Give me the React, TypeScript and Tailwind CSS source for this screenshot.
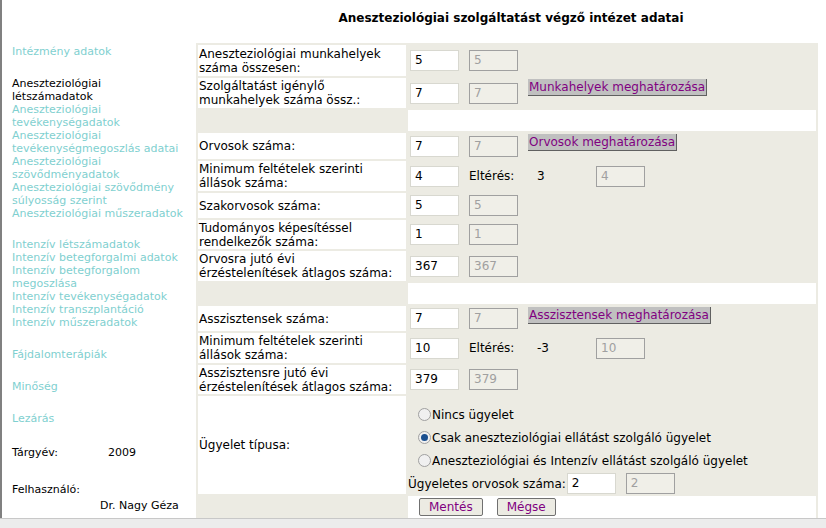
import React from "react";

const F = { fontFamily: '"DejaVu Sans", Verdana, sans-serif' };

function In({ v, dis }: { v: string; dis?: boolean }) {
  return (
    <span
      className={`inline-block w-[49px] h-[21px] border px-[4px] leading-[19px] text-[12px] align-middle ${
        dis ? "border-[#a0a0a0] bg-[#f0efe8] text-[#a0a0a0]" : "border-[#d8d8d0] bg-white text-black"
      }`}
    >
      {v}
    </span>
  );
}

function Btn({ t }: { t: string }) {
  return (
    <span className="inline-block bg-[#c0c0c0] text-[#800080] text-[12px] leading-[16px] px-[1px] border-b border-r border-[#606060] self-start mt-[1px]">
      {t}
    </span>
  );
}

function Row({ label, h, children, spacer }: { label?: React.ReactNode; h: number; children?: React.ReactNode; spacer?: boolean }) {
  return (
    <div className="flex gap-[2px]" style={{ height: h }}>
      <div className={`w-[208px] ${spacer ? "bg-[#ecebe3]" : "bg-white"} px-[1px] flex items-center text-[12px] leading-[14px]`}>{label}</div>
      <div className={`flex-1 ${spacer ? "bg-white" : "bg-[#ecebe3]"} flex items-center gap-[10px] pl-[2px]`}>{children}</div>
    </div>
  );
}

const link = "text-[#7fd0d0]";

export default function App() {
  return (
    <div className="w-[826px] h-[528px] bg-white relative overflow-hidden text-black" style={F}>
      <div className="absolute left-0 top-0 bottom-[10px] w-[2px] bg-[#808080]" />
      <div className="h-[43px] pt-[9px] pl-[196px] text-center text-[12px] font-bold">
        Aneszteziológiai szolgáltatást végző intézet adatai
      </div>
      <div className="flex">
        <div className="w-[196px] pl-[12px] text-[11px] leading-[13px]">
          <div className={`${link} mt-[2px]`}>Intézmény adatok</div>
          <div className="mt-[19px]">Aneszteziológiai<br />létszámadatok</div>
          <div className={link}>Aneszteziológiai<br />tevékenységadatok</div>
          <div className={link}>Aneszteziológiai<br />tevékenységmegoszlás adatai</div>
          <div className={link}>Aneszteziológiai<br />szövődményadatok</div>
          <div className={link}>Aneszteziológiai szövődmény<br />súlyosság szerint</div>
          <div className={link}>Aneszteziológiai műszeradatok</div>
          <div className={`${link} mt-[18px]`}>Intenzív létszámadatok</div>
          <div className={link}>Intenzív betegforgalmi adatok</div>
          <div className={link}>Intenzív betegforgalom<br />megoszlása</div>
          <div className={link}>Intenzív tevékenységadatok</div>
          <div className={link}>Intenzív transzplantáció</div>
          <div className={link}>Intenzív műszeradatok</div>
          <div className={`${link} mt-[19px]`}>Fájdalomterápiák</div>
          <div className={`${link} mt-[19px]`}>Minőség</div>
          <div className={`${link} mt-[19px]`}>Lezárás</div>
          <div className="mt-[21px] flex"><span className="w-[96px]">Tárgyév:</span><span>2009</span></div>
          <div className="mt-[24px]">Felhasználó:</div>
          <div className="mt-[3px] pl-[88px]">Dr. Nagy Géza</div>
        </div>
        <div className="w-[622px] bg-[#ecebe3] p-[2px] flex flex-col gap-[2px] h-[477px]">
          <Row h={31} label={<span>Aneszteziológiai munkahelyek<br />száma összesen:</span>}><In v="5" /><In v="5" dis /></Row>
          <Row h={30} label={<span>Szolgáltatást igénylő<br />munkahelyek száma össz.:</span>}><In v="7" /><In v="7" dis /><Btn t="Munkahelyek meghatározása" /></Row>
          <Row h={21} spacer />
          <Row h={26} label="Orvosok száma:"><In v="7" /><In v="7" dis /><Btn t="Orvosok meghatározása" /></Row>
          <Row h={30} label={<span>Minimum feltételek szerinti<br />állások száma:</span>}><In v="4" /><span className="text-[12px] w-[58px]">Eltérés:</span><span className="text-[12px] w-[49px]">3</span><In v="4" dis /></Row>
          <Row h={25} label="Szakorvosok száma:"><In v="5" /><In v="5" dis /></Row>
          <Row h={29} label={<span>Tudományos képesítéssel<br />rendelkezők száma:</span>}><In v="1" /><In v="1" dis /></Row>
          <Row h={30} label={<span>Orvosra jutó évi<br />érzéstelenítések átlagos száma:</span>}><In v="367" /><In v="367" dis /></Row>
          <Row h={21} spacer />
          <Row h={25} label="Asszisztensek száma:"><In v="7" /><In v="7" dis /><Btn t="Asszisztensek meghatározása" /></Row>
          <Row h={30} label={<span>Minimum feltételek szerinti<br />állások száma:</span>}><In v="10" /><span className="text-[12px] w-[58px]">Eltérés:</span><span className="text-[12px] w-[49px]">-3</span><In v="10" dis /></Row>
          <Row h={29} label={<span>Asszisztensre jutó évi<br />érzéstelenítések átlagos száma:</span>}><In v="379" /><In v="379" dis /></Row>
          <div className="flex gap-[2px] h-[98px]">
            <div className="w-[208px] bg-white px-[1px] flex items-center text-[12px]">Ügyelet típusa:</div>
            <div className="flex-1 bg-[#ecebe3] text-[12px] flex flex-col pt-[7px]">
              {["Nincs ügyelet", "Csak aneszteziológiai ellátást szolgáló ügyelet", "Aneszteziológiai és Intenzív ellátást szolgáló ügyelet"].map((t, i) => (
                <div key={t} className="flex items-center gap-[1px] pl-[10px] h-[24px]">
                  <span className="w-[13px] h-[13px] rounded-full border border-[#a0a0a0] bg-[#f0f0f0] flex items-center justify-center">
                    {i === 1 && <span className="w-[7px] h-[7px] rounded-full bg-[#1a4f8f]" />}
                  </span>
                  <span>{t}</span>
                </div>
              ))}
              <div className="flex items-center gap-[10px] mt-[1px]">
                <span className="-mr-[9px]">Ügyeletes orvosok száma:</span>
                <In v="2" />
                <In v="2" dis />
              </div>
            </div>
          </div>
          <Row h={22} spacer>
            <span className="ml-[9px] inline-flex gap-[14px]">
              <span className="border border-[#707070] rounded-[2px] bg-[#ecebe3] text-[#800080] text-[12px] px-[9px] leading-[16px]">Mentés</span>
              <span className="border border-[#707070] rounded-[2px] bg-[#ecebe3] text-[#800080] text-[12px] px-[9px] leading-[16px]">Mégse</span>
            </span>
          </Row>
        </div>
      </div>
      <div className="absolute left-0 right-0 bottom-0 h-[10px] bg-[#ececec] border-t border-[#c8c8c8]" />
    </div>
  );
}
